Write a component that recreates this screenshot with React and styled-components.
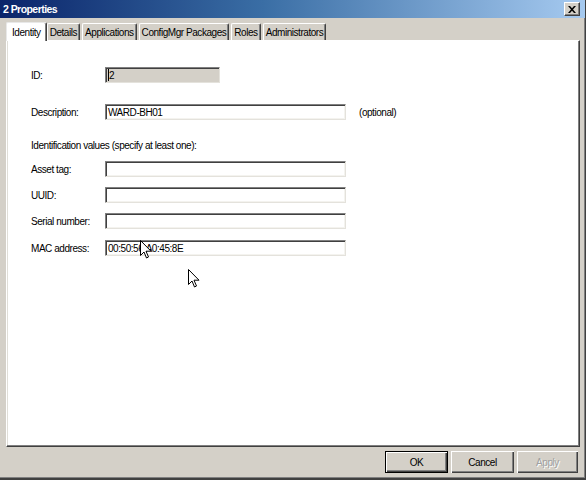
import React from "react";
import styled, { createGlobalStyle } from "styled-components";

const Global = createGlobalStyle`
  html, body { margin: 0; padding: 0; background: #d4d0c8; overflow: hidden; }
  body { font-family: "Liberation Sans", Arial, sans-serif; font-size: 10px; letter-spacing: -0.45px; color: #000; }
  * { box-sizing: border-box; }
`;

const Window = styled.div`
  position: relative;
  width: 586px;
  height: 480px;
  background: #d4d0c8;
  display: flex;
  flex-direction: column;
  border-right: 1px solid #404040;
  border-bottom: 2px solid #404040;
  box-shadow: inset -1px 0 0 #808080, inset 0 -1px 0 #808080;
`;

const TitleBar = styled.div`
  height: 18px;
  flex: none;
  display: flex;
  align-items: center;
  justify-content: space-between;
  padding: 0 4px 0 3px;
  background: linear-gradient(to right, #0a246a 0%, #3a6ea5 45%, #a6caf0 100%);
`;

const Title = styled.span`
  color: #fff;
  font-weight: bold;
  font-size: 10.5px;
  letter-spacing: -0.55px;
`;

const CloseBtn = styled.div`
  width: 16px;
  height: 14px;
  background: #d4d0c8;
  border-top: 1px solid #fff;
  border-left: 1px solid #fff;
  border-right: 1px solid #404040;
  border-bottom: 1px solid #404040;
  box-shadow: inset -1px -1px 0 #808080;
  display: flex;
  align-items: center;
  justify-content: center;
  margin-right: 1px;
`;

const Body = styled.div`
  flex: 1;
  display: flex;
  flex-direction: column;
  padding: 3px 5px 0 6px;
`;

const TabRow = styled.div`
  display: flex;
  align-items: flex-end;
  height: 19px;
  padding-left: 2px;
  position: relative;
  z-index: 1;
`;

const Tab = styled.div`
  height: ${(p) => (p.$active ? "19px" : "17px")};
  padding: 0 ${(p) => (p.$active ? "5px" : "2px")};
  margin-left: ${(p) => (p.$active ? "-2px" : "0")};
  margin-right: ${(p) => (p.$active ? "0" : "2px")};
  margin-bottom: ${(p) => (p.$active ? "-1px" : "0")};
  background: ${(p) => (p.$active ? "#fff" : "#d4d0c8")};
  border-top: 1px solid ${(p) => (p.$active ? "#e8e8e8" : "#fff")};
  border-left: 1px solid ${(p) => (p.$active ? "#e8e8e8" : "#fff")};
  border-right: 1px solid #404040;
  box-shadow: inset -1px 0 0 #808080;
  border-top-left-radius: 2px;
  border-top-right-radius: 2px;
  display: flex;
  align-items: center;
  white-space: nowrap;
  padding-top: ${(p) => (p.$active ? "0" : "1px")};
`;

const Panel = styled.div`
  height: 407px;
  background: #fff;
  border-top: 1px solid #fff;
  border-left: 1px solid #fff;
  border-right: 1px solid #404040;
  border-bottom: 1px solid #404040;
  box-shadow: inset -1px -1px 0 #808080, inset 1px 0 0 #e0ded8;
  padding: 26px 0 0 24px;
  display: flex;
  flex-direction: column;
`;

const Row = styled.div`
  display: flex;
  align-items: center;
  height: 16px;
  margin-top: ${(p) => p.$mt || 0}px;
`;

const Label = styled.div`
  width: 74px;
  flex: none;
`;

const Field = styled.div`
  width: ${(p) => p.$w}px;
  height: 16px;
  background: ${(p) => (p.$disabled ? "#d4d0c8" : "#fff")};
  border-top: 1px solid #808080;
  border-left: 1px solid #808080;
  border-right: 1px solid #e4e2dc;
  border-bottom: 1px solid #e4e2dc;
  box-shadow: inset 1px 1px 0 #404040, inset -1px -1px 0 ${(p) => (p.$disabled ? "#d4d0c8" : "#f4f3ef")};
  padding: 0 2px;
  display: flex;
  align-items: center;
`;

const Note = styled.span`
  margin-left: 13px;
`;

const Section = styled.div`
  margin-top: 20px;
  height: 12px;
  line-height: 12px;
`;

const Caret = styled.span`
  display: inline-block;
  width: 1px;
  height: 12px;
  background: #000;
`;

const Footer = styled.div`
  display: flex;
  justify-content: flex-end;
  gap: 3px;
  padding-top: 4px;
  padding-right: 2px;
`;

const Button = styled.div`
  width: ${(p) => p.$w || 63}px;
  height: 22px;
  background: #d4d0c8;
  display: flex;
  align-items: center;
  justify-content: center;
  color: ${(p) => (p.$disabled ? "#a0a0a0" : "#000")};
  text-shadow: ${(p) => (p.$disabled ? "1px 1px 0 #fff" : "none")};
  border: ${(p) => (p.$default ? "1px solid #000" : "none")};
  box-shadow: inset 1px 1px 0 #fff, inset -1px -1px 0 #404040, inset -2px -2px 0 #808080;
`;

const Cursor = styled.svg`
  position: absolute;
  left: ${(p) => p.$x}px;
  top: ${(p) => p.$y}px;
  pointer-events: none;
`;

const Arrow = ({ x, y }) => (
  <Cursor $x={x} $y={y} width="12" height="19" viewBox="0 0 12 19">
    <path
      d="M0.5 0.5 L0.5 15.5 L4 12 L6.5 18 L8.5 17 L6 11.2 L11 11.2 Z"
      fill="#fff"
      stroke="#000"
      strokeWidth="1"
      strokeLinejoin="miter"
    />
  </Cursor>
);

export default function App() {
  return (
    <>
      <Global />
      <Window>
        <TitleBar>
          <Title>2 Properties</Title>
          <CloseBtn>
            <svg width="8" height="7" viewBox="0 0 8 7">
              <path d="M0 0 L2 0 L4 2.2 L6 0 L8 0 L5 3.5 L8 7 L6 7 L4 4.8 L2 7 L0 7 L3 3.5 Z" fill="#000" />
            </svg>
          </CloseBtn>
        </TitleBar>
        <Body>
          <TabRow>
            <Tab $active>Identity</Tab>
            <Tab>Details</Tab>
            <Tab>Applications</Tab>
            <Tab>ConfigMgr Packages</Tab>
            <Tab>Roles</Tab>
            <Tab>Administrators</Tab>
          </TabRow>
          <Panel>
            <Row>
              <Label>ID:</Label>
              <Field $w={115} $disabled>
                <Caret />2
              </Field>
            </Row>
            <Row $mt={21}>
              <Label>Description:</Label>
              <Field $w={241}>WARD-BH01</Field>
              <Note>(optional)</Note>
            </Row>
            <Section>Identification values (specify at least one):</Section>
            <Row $mt={9}>
              <Label>Asset tag:</Label>
              <Field $w={241} />
            </Row>
            <Row $mt={10}>
              <Label>UUID:</Label>
              <Field $w={241} />
            </Row>
            <Row $mt={10}>
              <Label>Serial number:</Label>
              <Field $w={241} />
            </Row>
            <Row $mt={11}>
              <Label>MAC address:</Label>
              <Field $w={241}>00:50:56:A0:45:8E</Field>
            </Row>
          </Panel>
          <Footer>
            <Button $default>OK</Button>
            <Button>Cancel</Button>
            <Button $disabled $w={61}>Apply</Button>
          </Footer>
        </Body>
        <Arrow x={140} y={240} />
        <Arrow x={188} y={269} />
      </Window>
    </>
  );
}
